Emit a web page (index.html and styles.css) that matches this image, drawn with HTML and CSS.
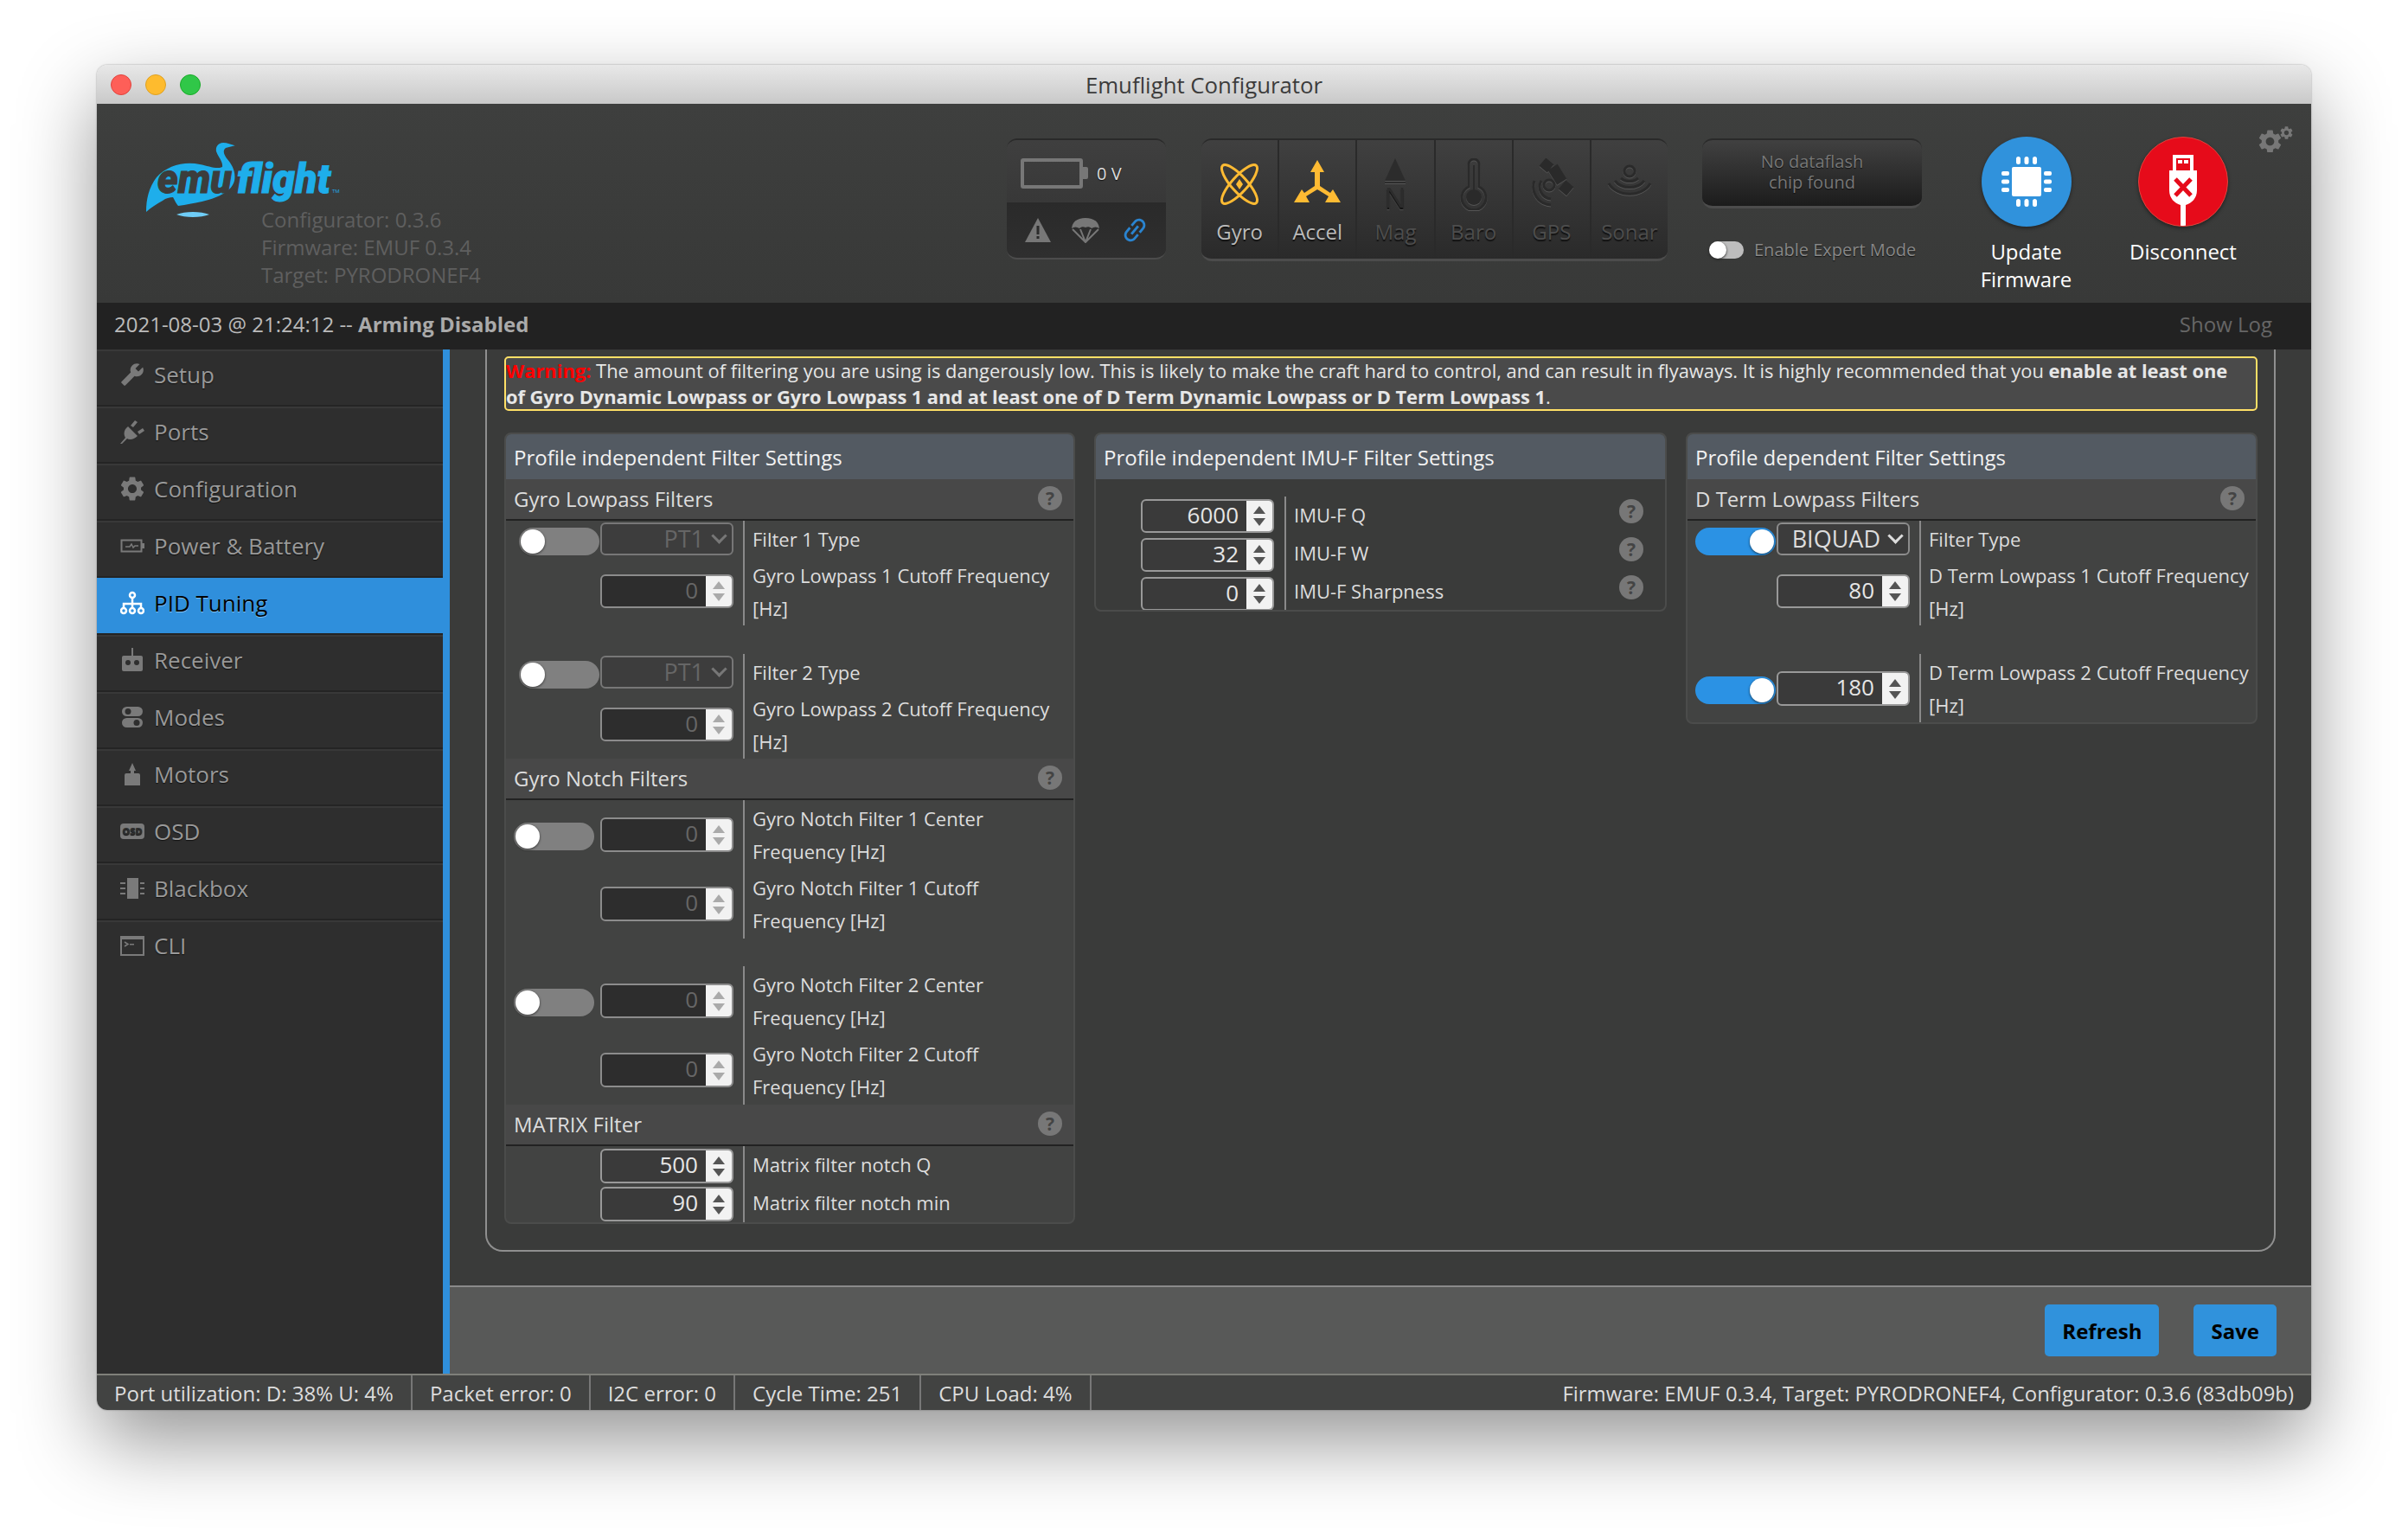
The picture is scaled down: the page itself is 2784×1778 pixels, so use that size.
FILE: index.html
```html
<!DOCTYPE html>
<html>
<head>
<meta charset="utf-8">
<title>Emuflight Configurator</title>
<link rel="stylesheet" href="styles.css">
</head>
<body>
<svg class="defs" width="0" height="0">
	<symbol id="gear" viewBox="2 2 20 20"><path d="M19.14 12.94c.04-.3.06-.61.06-.94 0-.32-.02-.64-.07-.94l2.03-1.58a.49.49 0 0 0 .12-.61l-1.92-3.32a.488.488 0 0 0-.59-.22l-2.39.96c-.5-.38-1.03-.7-1.62-.94l-.36-2.54a.484.484 0 0 0-.48-.41h-3.84c-.24 0-.43.17-.47.41l-.36 2.54c-.59.24-1.13.57-1.62.94l-2.39-.96c-.22-.08-.47 0-.59.22L2.74 8.87c-.12.21-.08.47.12.61l2.03 1.58c-.05.3-.09.63-.09.94s.02.64.07.94l-2.03 1.58a.49.49 0 0 0-.12.61l1.92 3.32c.12.22.37.29.59.22l2.39-.96c.5.38 1.03.7 1.62.94l.36 2.54c.05.24.24.41.48.41h3.84c.24 0 .44-.17.47-.41l.36-2.54c.59-.24 1.13-.56 1.62-.94l2.39.96c.22.08.47 0 .59-.22l1.92-3.32c.12-.22.07-.47-.12-.61l-2.01-1.58zM12 15.6c-1.98 0-3.6-1.62-3.6-3.6s1.62-3.6 3.6-3.6 3.6 1.62 3.6 3.6-1.62 3.6-3.6 3.6z"/></symbol>
</svg>

<div class="window">
	<div class="titlebar">
		<span class="light red"></span><span class="light yellow"></span><span class="light green"></span>
		<span class="title">Emuflight Configurator</span>
	</div>

	<div class="header">
		<div class="logo-block">
			<svg class="logo" width="225" height="90" viewBox="0 0 225 90">
				<path fill="#1eaeeb" d="M102.7 3.3 L92 6 C88 9 90 14 93 18 C99 25 104 33 102 44 C99 55 88 61 72 66 C62 69 52 70 44 72 L37 73 C34 70 33 66 31 63 C27 63 23 64 19 67 C12 71 5 75 0 80 C0 65 3 52 12 40 C24 26 45 21 62 25 C72 27 82 31 88 28 C89 22 83 16 81 10 C80 4 84 0 89 0 C94 0 98 2 102.7 3.3 Z"/>
				<path fill="#6fcdf7" d="M35 83 C45 79 63 79 73 83 C63 87 45 87 35 83 Z"/>
				<text class="logo-word" x="13" y="58" fill="#3c3d3c" stroke="#3c3d3c" textLength="86" lengthAdjust="spacingAndGlyphs">emu</text>
				<text class="logo-word" x="105" y="58" fill="#1eaeeb" stroke="#1eaeeb" textLength="108" lengthAdjust="spacingAndGlyphs">flight</text>
				<text class="logo-tm" x="215" y="58" fill="#1eaeeb">TM</text>
			</svg>
			<div class="versions">
				<div>Configurator: 0.3.6</div>
				<div>Firmware: EMUF 0.3.4</div>
				<div>Target: PYRODRONEF4</div>
			</div>
		</div>

		<div class="battery-box">
			<div class="battery-top">
				<span class="battery"></span><span class="battery-nub"></span>
				<span class="volts">0 V</span>
			</div>
			<div class="battery-bottom">
				<svg width="32" height="30" viewBox="0 0 32 30"><path fill="#777" d="M16 1 L31 29 H1 Z"/><rect x="14.5" y="10" width="3" height="10" fill="#2b2b2b"/><rect x="14.5" y="22" width="3" height="3" fill="#2b2b2b"/></svg>
				<svg width="34" height="30" viewBox="0 0 34 30"><path fill="#777" d="M1 13 C2 4 9 1 17 1 C25 1 32 4 33 13 C30 11 27 11 24 13 C22 11 19 11 17 12 C15 11 12 11 10 13 C7 11 4 11 1 13 Z"/><path fill="none" stroke="#777" stroke-width="2" d="M2 14 L17 29 L32 14 M11 14 L17 29 L23 14"/></svg>
				<svg class="link-icon" width="36" height="36" viewBox="0 0 24 24"><path fill="#2a84d0" d="M3.9 12c0-1.71 1.39-3.1 3.1-3.1h4V7H7c-2.76 0-5 2.24-5 5s2.24 5 5 5h4v-1.9H7c-1.71 0-3.1-1.39-3.1-3.1zM8 13h8v-2H8v2zm9-6h-4v1.9h4c1.71 0 3.1 1.39 3.1 3.1s-1.39 3.1-3.1 3.1h-4V17h4c2.76 0 5-2.24 5-5s-2.24-5-5-5z"/></svg>
			</div>
		</div>

		<div class="sensors">
			<div class="sensor on">
				<svg width="60" height="60" viewBox="0 0 60 60"><g fill="none" stroke="#ffbb33" stroke-width="3"><ellipse cx="30" cy="30" rx="9" ry="29" transform="rotate(42 30 30)"/><ellipse cx="30" cy="30" rx="9" ry="29" transform="rotate(-42 30 30)"/></g><path fill="#ffbb33" d="M30 24 L34 30 L30 36 L26 30 Z"/></svg>
				<span>Gyro</span>
			</div>
			<div class="sensor on">
				<svg width="60" height="60" viewBox="0 0 60 60"><g fill="#ffbb33"><path d="M30 2 L38 16 H33 V32 L45 40 L48 36 L57 51 H39 L43 44 L30 36 L17 44 L21 51 H3 L12 36 L15 40 L27 32 V16 H22 Z"/></g></svg>
				<span>Accel</span>
			</div>
			<div class="sensor">
				<svg class="emboss mag" width="60" height="66" viewBox="0 0 60 66"><path fill="#2c2c2c" d="M30 0 L42 26 H18 Z"/><rect x="18" y="27" width="24" height="2" fill="#2c2c2c"/><text class="mag-n" x="30" y="57" fill="#2c2c2c" text-anchor="middle">N</text></svg>
				<span>Mag</span>
			</div>
			<div class="sensor">
				<svg class="emboss" width="60" height="60" viewBox="0 0 60 60"><g fill="none" stroke="#2a2a2a" stroke-width="3"><path d="M24 33 V7 A6 6 0 0 1 36 7 V33 A14 14 0 1 1 24 33 Z"/></g><circle cx="30" cy="45" r="9" fill="#2a2a2a"/><rect x="29" y="8" width="2" height="30" fill="#2a2a2a"/></svg>
				<span>Baro</span>
			</div>
			<div class="sensor">
				<svg class="emboss" width="60" height="60" viewBox="0 0 60 60"><g fill="#2a2a2a"><rect x="18" y="2" width="12" height="12" transform="rotate(40 24 8)"/><rect x="30" y="9" width="13" height="20" transform="rotate(-32 36 19)"/><rect x="41" y="28" width="12" height="13" transform="rotate(40 47 34)"/></g><g fill="none" stroke="#2a2a2a" stroke-width="3"><circle cx="27" cy="31" r="6"/><path d="M18 26 A14 14 0 0 0 29 47 M10 26 A21 21 0 0 0 29 54"/></g></svg>
				<span>GPS</span>
			</div>
			<div class="sensor">
				<svg class="emboss" width="60" height="60" viewBox="0 0 60 60"><g fill="none" stroke="#2a2a2a" stroke-width="3"><circle cx="30" cy="15" r="6"/><path d="M20 23 A14 12 0 0 0 40 23 M13 26 A20 16 0 0 0 47 26 M6 29 A26 20 0 0 0 54 29"/></g></svg>
				<span>Sonar</span>
			</div>
		</div>

		<div class="flash-col">
			<div class="flash">No dataflash<br>chip found</div>
			<div class="expert">
				<span class="mini-toggle"><span class="mini-knob"></span></span>
				<span class="expert-label">Enable Expert Mode</span>
			</div>
		</div>

		<div class="round-col">
			<div class="round blue">
				<svg width="60" height="60" viewBox="0 0 60 60" fill="#fff"><rect x="13" y="13" width="34" height="34" rx="2"/><rect x="18" y="1" width="5" height="9" rx="2.5"/><rect x="27.500" y="1" width="5" height="9" rx="2.500"/><rect x="37" y="1" width="5" height="9" rx="2.500"/><rect x="18" y="50" width="5" height="9" rx="2.500"/><rect x="27.500" y="50" width="5" height="9" rx="2.500"/><rect x="37" y="50" width="5" height="9" rx="2.500"/><rect x="1" y="18" width="9" height="5" rx="2"/><rect x="1" y="27.500" width="9" height="5" rx="2"/><rect x="1" y="37" width="9" height="5" rx="2"/><rect x="50" y="18" width="9" height="5" rx="2"/><rect x="50" y="27.500" width="9" height="5" rx="2"/><rect x="50" y="37" width="9" height="5" rx="2"/></svg>
			</div>
			<div class="round-label">Update<br>Firmware</div>
		</div>
		<div class="round-col">
			<div class="round red">
				<svg width="40" height="104" viewBox="0 0 40 104"><path fill="#fff" d="M8 21 H32 V39 H36 V62 C36 71 30 77 23 79 V104 H17 V79 C10 77 4 71 4 62 V39 H8 Z"/><rect x="12" y="25" width="16" height="14" fill="#e60b1a"/><rect x="14" y="27" width="5" height="4" fill="#fff"/><rect x="21" y="27" width="5" height="4" fill="#fff"/><path stroke="#e60b1a" stroke-width="5" d="M11 49 L29 68 M29 49 L11 68"/></svg>
			</div>
			<div class="round-label">Disconnect</div>
		</div>

		<svg class="settings" width="40" height="30" viewBox="0 0 40 30" fill="#777">
			<use href="#gear" x="0" y="4" width="27" height="27"/>
			<use href="#gear" x="25" y="0" width="15" height="15"/>
		</svg>
	</div>

	<div class="logbar">
		<span>2021-08-03 @ 21:24:12 -- <b>Arming Disabled</b></span>
		<span class="show-log">Show Log</span>
	</div>

	<div class="middle">
		<ul class="menu">
			<li><svg width="28" height="28" viewBox="0 0 24 24"><path transform="translate(24 0) scale(-1 1)" d="M22.7 19l-9.1-9.1c.9-2.300.4-5-1.500-6.900-2-2-5-2.400-7.400-1.300L9 6 6 9 1.600 4.700C.4 7.100.9 10.100 2.900 12.100c1.900 1.900 4.600 2.400 6.900 1.500l9.100 9.100c.4.400 1 .4 1.400 0l2.300-2.300c.5-.4.5-1.100.1-1.400z"/></svg>Setup</li>
			<li><svg width="28" height="28" viewBox="0 0 28 28"><path d="M0 28 L6 21 C3 16 5 11 9 8 L20 19 C16 23 11 24 8 22 L2 28 Z"/><path d="M12 7 L17 1 L20 3 L15 9 Z M20 14 L26 10 L28 13 L22 17 Z"/></svg>Ports</li>
			<li><svg width="28" height="28" viewBox="0 0 28 28"><use href="#gear" width="28" height="28"/></svg>Configuration</li>
			<li><svg width="28" height="28" viewBox="0 0 28 28"><rect x="1.500" y="7.500" width="23" height="13" fill="none" stroke="#7a7a7a" stroke-width="2"/><rect x="25" y="11" width="3" height="6"/><path d="M6 15 H11 L13 12 L15 16 L17 14 H21" fill="none" stroke="#7a7a7a" stroke-width="1.500"/></svg>Power &amp; Battery</li>
			<li class="active"><svg width="28" height="28" viewBox="0 0 28 28"><g fill="none" stroke="#fff" stroke-width="2.500"><circle cx="14" cy="5" r="3"/><circle cx="4" cy="23" r="3"/><circle cx="14" cy="23" r="3"/><circle cx="24" cy="23" r="3"/><path d="M14 8 V20 M4 20 V15 H24 V20"/></g></svg><span>PID Tuning</span></li>
			<li><svg width="28" height="28" viewBox="0 0 28 28"><rect x="13" y="0" width="2" height="10"/><path d="M4 9 H24 Q26 9 26 11 V25 Q26 27 24 27 H4 Q2 27 2 25 V11 Q2 9 4 9 Z"/><circle cx="9" cy="17" r="3" fill="#2e2e2e"/><circle cx="19" cy="17" r="3" fill="#2e2e2e"/></svg>Receiver</li>
			<li><svg width="28" height="28" viewBox="0 0 28 28"><rect x="2" y="2" width="24" height="11" rx="5.500"/><rect x="2" y="15" width="24" height="11" rx="5.500"/><circle cx="9" cy="7.500" r="3.500" fill="#2e2e2e"/><circle cx="19" cy="20.500" r="3.500" fill="#2e2e2e"/></svg>Modes</li>
			<li><svg width="28" height="28" viewBox="0 0 28 28"><path d="M14 1 L18 10 H16 V13 H21 Q23 13 23 15 V27 H5 V15 Q5 13 7 13 H12 V10 H10 Z"/></svg>Motors</li>
			<li><svg width="28" height="28" viewBox="0 0 28 28"><rect x="0" y="5" width="28" height="18" rx="4"/><text class="osd-mark" x="14" y="18" text-anchor="middle" fill="#2e2e2e">OSD</text></svg>OSD</li>
			<li><svg width="28" height="28" viewBox="0 0 28 28"><rect x="8" y="2" width="13" height="24"/><path d="M0 7 H6 V9 H0 Z M0 13 H6 V15 H0 Z M0 19 H6 V21 H0 Z M23 7 H28 V9 H23 Z M23 13 H28 V15 H23 Z M23 19 H28 V21 H23 Z"/></svg>Blackbox</li>
			<li class="last"><svg width="28" height="28" viewBox="0 0 28 28"><rect x="1" y="4" width="26" height="21" fill="none" stroke="#7a7a7a" stroke-width="2"/><rect x="1" y="4" width="26" height="3"/><path d="M5 10 L9 12.500 L5 15" fill="none" stroke="#7a7a7a" stroke-width="1.500"/><rect x="11" y="12" width="5" height="1.500"/></svg>CLI</li>
		</ul>

		<div class="content">
			<div class="main">
				<div class="tab-box">
					<div class="warning"><span class="warn-word">Warning:</span> The amount of filtering you are using is dangerously low. This is likely to make the craft hard to control, and can result in flyaways. It is highly recommended that you <b>enable at least one<br>of Gyro Dynamic Lowpass or Gyro Lowpass 1 and at least one of D Term Dynamic Lowpass or D Term Lowpass 1</b>.</div>

					<div class="panels">
						<div class="panel p1">
							<div class="panel-head">Profile independent Filter Settings</div>
							<div class="sub-head">Gyro Lowpass Filters<span class="help">?</span></div>

							<div class="row">
								<div class="ctl">
									<div class="line ends">
										<span class="toggle"><span class="knob"></span></span>
										<span class="select off">PT1<i class="chev"></i></span>
									</div>
									<div class="line gap22">
										<span class="spin off"><span class="val">0</span><span class="arrows"><i class="up"></i><i class="down"></i></span></span>
									</div>
								</div>
								<div class="lbl"><p>Filter 1 Type</p><p>Gyro Lowpass 1 Cutoff Frequency<br>[Hz]</p></div>
							</div>
							<div class="row next">
								<div class="ctl">
									<div class="line ends">
										<span class="toggle"><span class="knob"></span></span>
										<span class="select off">PT1<i class="chev"></i></span>
									</div>
									<div class="line gap22">
										<span class="spin off"><span class="val">0</span><span class="arrows"><i class="up"></i><i class="down"></i></span></span>
									</div>
								</div>
								<div class="lbl"><p>Filter 2 Type</p><p>Gyro Lowpass 2 Cutoff Frequency<br>[Hz]</p></div>
							</div>

							<div class="sub-head">Gyro Notch Filters<span class="help">?</span></div>
							<div class="row notch">
								<div class="ctl">
									<div class="line top20 shifted">
										<span class="toggle"><span class="knob"></span></span>
										<span class="spin tall off"><span class="val">0</span><span class="arrows"><i class="up"></i><i class="down"></i></span></span>
									</div>
									<div class="line top40">
										<span class="spin tall off"><span class="val">0</span><span class="arrows"><i class="up"></i><i class="down"></i></span></span>
									</div>
								</div>
								<div class="lbl"><p>Gyro Notch Filter 1 Center<br>Frequency [Hz]</p><p>Gyro Notch Filter 1 Cutoff<br>Frequency [Hz]</p></div>
							</div>
							<div class="row notch next-small">
								<div class="ctl">
									<div class="line top20 shifted">
										<span class="toggle"><span class="knob"></span></span>
										<span class="spin tall off"><span class="val">0</span><span class="arrows"><i class="up"></i><i class="down"></i></span></span>
									</div>
									<div class="line top40">
										<span class="spin tall off"><span class="val">0</span><span class="arrows"><i class="up"></i><i class="down"></i></span></span>
									</div>
								</div>
								<div class="lbl"><p>Gyro Notch Filter 2 Center<br>Frequency [Hz]</p><p>Gyro Notch Filter 2 Cutoff<br>Frequency [Hz]</p></div>
							</div>

							<div class="sub-head">MATRIX Filter<span class="help">?</span></div>
							<div class="row matrix">
								<div class="ctl">
									<div class="line top3">
										<span class="spin tall"><span class="val">500</span><span class="arrows"><i class="up"></i><i class="down"></i></span></span>
									</div>
									<div class="line top4">
										<span class="spin tall"><span class="val">90</span><span class="arrows"><i class="up"></i><i class="down"></i></span></span>
									</div>
								</div>
								<div class="lbl single"><p>Matrix filter notch Q</p><p>Matrix filter notch min</p></div>
							</div>
						</div>

						<div class="panel p2">
							<div class="panel-head">Profile independent IMU-F Filter Settings</div>
							<div class="row imu">
								<div class="ctl">
									<div class="line top3"><span class="spin"><span class="val">6000</span><span class="arrows"><i class="up"></i><i class="down"></i></span></span></div>
									<div class="line top6"><span class="spin"><span class="val">32</span><span class="arrows"><i class="up"></i><i class="down"></i></span></span></div>
									<div class="line top6"><span class="spin"><span class="val">0</span><span class="arrows"><i class="up"></i><i class="down"></i></span></span></div>
								</div>
								<div class="lbl single">
									<p>IMU-F Q<span class="help">?</span></p>
									<p>IMU-F W<span class="help">?</span></p>
									<p>IMU-F Sharpness<span class="help">?</span></p>
								</div>
							</div>
						</div>

						<div class="panel p3">
							<div class="panel-head">Profile dependent Filter Settings</div>
							<div class="sub-head">D Term Lowpass Filters<span class="help">?</span></div>
							<div class="row">
								<div class="ctl">
									<div class="line ends">
										<span class="toggle on"><span class="knob"></span></span>
										<span class="select">BIQUAD<i class="chev"></i></span>
									</div>
									<div class="line gap22">
										<span class="spin"><span class="val">80</span><span class="arrows"><i class="up"></i><i class="down"></i></span></span>
									</div>
								</div>
								<div class="lbl"><p>Filter Type</p><p>D Term Lowpass 1 Cutoff Frequency<br>[Hz]</p></div>
							</div>
							<div class="row next">
								<div class="ctl">
									<div class="line top20 shifted">
										<span class="toggle on"><span class="knob"></span></span>
										<span class="spin tall"><span class="val">180</span><span class="arrows"><i class="up"></i><i class="down"></i></span></span>
									</div>
								</div>
								<div class="lbl"><p>D Term Lowpass 2 Cutoff Frequency<br>[Hz]</p></div>
							</div>
						</div>
					</div>
				</div>
			</div>
			<div class="toolbar">
				<a class="btn">Refresh</a>
				<a class="btn">Save</a>
			</div>
		</div>
	</div>

	<div class="statusbar">
		<span class="stat">Port utilization: D: 38% U: 4%</span>
		<span class="stat">Packet error: 0</span>
		<span class="stat">I2C error: 0</span>
		<span class="stat">Cycle Time: 251</span>
		<span class="stat">CPU Load: 4%</span>
		<span class="fw">Firmware: EMUF 0.3.4, Target: PYRODRONEF4, Configurator: 0.3.6 (83db09b)</span>
	</div>
</div>
</body>
</html>
```

FILE: styles.css
```css
* { box-sizing: border-box; }
html, body { margin: 0; height: 100%; }
body {
	background: #fff;
	font-family: "Open Sans", sans-serif;
	font-size: 22px;
	color: #ddd;
	overflow: hidden;
}
.defs { display: block; height: 0; }
p { margin: 0; }
b { font-weight: 700; }

.window {
	width: 2560px;
	height: 1555px;
	margin: 75px 0 0 112px;
	display: flex;
	flex-direction: column;
	border-radius: 12px;
	overflow: hidden;
	box-shadow: 0 36px 90px rgba(0,0,0,.42), 0 0 2px rgba(0,0,0,.4);
}

/* title bar */
.titlebar {
	height: 45px;
	flex: none;
	display: flex;
	align-items: center;
	padding-left: 16px;
	gap: 16px;
	background: linear-gradient(#e8e8e8, #c9c9c9);
	position: relative;
}
.light { width: 24px; height: 24px; border-radius: 50%; }
.red { background: #fe5f58; border: 1px solid #e0443e; }
.yellow { background: #febb2e; border: 1px solid #dea123; }
.green { background: #30c748; border: 1px solid #1aab29; }
.title {
	position: absolute;
	left: 0;
	right: 0;
	text-align: center;
	font-size: 25.800px;
	color: #3c3c3c;
}

/* header */
.header {
	height: 230px;
	flex: none;
	display: flex;
	align-items: flex-start;
	padding-top: 40px;
	background: linear-gradient(#3e3f3e, #383938);
	position: relative;
}
.logo-block { flex: 0 0 1052px; padding: 5px 0 0 57px; }
.logo { display: block; overflow: visible; }
.logo-word { font-family: Roboto, sans-serif; font-weight: 900; font-style: italic; font-size: 48px; stroke-width: 1; }
.logo-tm { font-size: 6px; font-family: "Open Sans", sans-serif; }
.versions {
	margin: -17px 0 0 133px;
	font-size: 24px;
	line-height: 32px;
	color: #5f5f5f;
}

.battery-box {
	width: 184px;
	height: 140px;
	border-radius: 12px;
	border-top: 2px solid #2a2a2a;
	border-bottom: 2px solid #4c4c4c;
	overflow: hidden;
}
.battery-top {
	height: 72px;
	display: flex;
	align-items: center;
	padding: 4px 0 0 16px;
	background: linear-gradient(#3f3f3f, #383838);
}
.battery { width: 72px; height: 35px; border: 4px solid #777; border-radius: 3px; }
.battery-nub { width: 6px; height: 14px; background: #777; border-radius: 0 2px 2px 0; }
.volts { margin-left: 10px; font-size: 20px; color: #ddd; text-shadow: 0 1px 1px #111; }
.battery-bottom {
	height: 64px;
	display: flex;
	align-items: center;
	padding-left: 20px;
	gap: 22px;
	background: linear-gradient(#2a2a2a, #2f2f2f);
}
.link-icon { transform: rotate(-50deg); }

.sensors {
	margin-left: 41px;
	width: 539px;
	height: 142px;
	display: flex;
	border-radius: 12px;
	border-top: 2px solid #2a2a2a;
	border-bottom: 3px solid #4c4c4c;
	overflow: hidden;
}
.sensor {
	flex: 1;
	display: flex;
	flex-direction: column;
	align-items: center;
	padding-top: 21px;
	background: linear-gradient(#404040, #2a2a2a);
	border-left: 2px solid #2a2a2a;
	font-size: 24px;
	color: #4d4d4d;
	text-shadow: 0 2px 1px #111;
}
.sensor:first-child { border-left: 0; }
.sensor svg { display: block; }
.sensor svg.mag { margin-bottom: -6px; }
.sensor span { margin-top: 9px; line-height: 32px; }
.sensor.on { color: #bbb; }
.emboss { filter: drop-shadow(0 1px 0 #555); }
.mag-n { font-family: "Liberation Sans", sans-serif; font-size: 34px; }

.flash-col { margin-left: 40px; width: 254px; }
.flash {
	height: 81px;
	border-radius: 12px;
	border-top: 2px solid #2a2a2a;
	border-bottom: 3px solid #4c4c4c;
	background: linear-gradient(#414141, #1c1c1c);
	text-align: center;
	font-size: 20px;
	line-height: 24px;
	padding-top: 13px;
	color: #777;
	text-shadow: 0 1px 1px #111;
}
.expert { display: flex; align-items: center; margin: 34px 0 0 8px; }
.mini-toggle {
	width: 40px;
	height: 20px;
	border-radius: 10px;
	background: #bdbdbd;
	display: flex;
}
.mini-knob { width: 20px; height: 20px; border-radius: 50%; background: #fff; box-shadow: 0 1px 3px #222; }
.expert-label { margin-left: 12px; font-size: 20px; color: #888; text-shadow: 0 1px 1px #111; }

.round-col {
	width: 182px;
	margin-top: -2px;
	display: flex;
	flex-direction: column;
	align-items: center;
}
.flash-col + .round-col { margin-left: 30px; width: 181px; }
.round {
	width: 104px;
	height: 104px;
	border-radius: 50%;
	display: flex;
	align-items: center;
	justify-content: center;
	overflow: hidden;
	box-shadow: 0 2px 4px rgba(0,0,0,.4);
}
.round.blue { background: #3092dc; }
.round.red { background: #e60b1a; }
.round-label {
	margin-top: 13px;
	text-align: center;
	font-size: 24px;
	line-height: 32px;
	color: #fff;
}
.settings { position: absolute; right: 21px; top: 26px; }

/* log line */
.logbar {
	height: 54px;
	flex: none;
	display: flex;
	align-items: center;
	justify-content: space-between;
	padding: 0 45px 6px 20px;
	background: #222;
	font-size: 24px;
	color: #bbb;
}
.logbar b { color: #aaa; }
.show-log { color: #666; }

/* menu */
.middle { flex: 1; display: flex; min-height: 0; }
.menu {
	width: 408px;
	flex: none;
	margin: 0;
	padding: 0;
	list-style: none;
	background: #2e2e2e;
	border-right: 8px solid #2f8fdc;
}
.menu li {
	height: 66px;
	display: flex;
	align-items: center;
	padding: 0 0 6px 27px;
	font-size: 26px;
	color: #999;
	border-bottom: 2px solid #242424;
	box-shadow: inset 0 2px 0 #383838;
	text-shadow: 0 1px 1px #111;
}
.menu li svg { width: 28px; margin-right: 11px; fill: #7a7a7a; flex: none; }
.menu li.active {
	background: #2f8fdc;
	box-shadow: none;
	color: #000;
	text-shadow: 0 1px 0 #7fc0f0;
}
.menu li.last { height: 64px; padding-bottom: 7px; border-bottom: 0; }

/* content */
.content { flex: 1; display: flex; flex-direction: column; min-width: 0; }
.main {
	flex: 1;
	background: #3a3b3a;
	padding: 0 41px;
	min-height: 0;
}
.tab-box {
	height: 1043px;
	border: 2px solid #8f8f8f;
	border-top: 0;
	border-radius: 0 0 20px 20px;
	padding: 8px 19px 0 20px;
}
.warning {
	height: 63px;
	border: 2px solid #ffe066;
	border-radius: 5px;
	background: #4a4a4a;
	font-size: 21.900px;
	line-height: 30px;
	color: #e6e6e6;
	white-space: nowrap;
	overflow: hidden;
}
.warning b { letter-spacing: -0.07px; }
.warn-word { color: #ff0000; font-weight: 700; }

.panels { display: flex; align-items: flex-start; margin-top: 25px; }
.panel {
	border: 2px solid #4b4c4b;
	border-radius: 8px;
	overflow: hidden;
}
.p1 { width: 660px; background: #424342; }
.p2 { width: 662px; margin-left: 22px; height: 207px; }
.p3 { width: 661px; margin-left: 22px; background: #424342; }
.panel-head {
	height: 52px;
	background: #535a62;
	color: #f2f2f2;
	font-size: 24px;
	line-height: 54px;
	padding-left: 9px;
}
.sub-head {
	height: 48px;
	display: flex;
	align-items: center;
	justify-content: space-between;
	padding: 0 13px 2px 9px;
	background: #484848;
	border-bottom: 2px solid #222;
	font-size: 24px;
	color: #ddd;
}
.help {
	width: 28px;
	height: 28px;
	border-radius: 50%;
	background: #777;
	color: #444;
	font-size: 21px;
	font-weight: 700;
	line-height: 28px;
	text-align: center;
	flex: none;
}

/* filter rows */
.row { display: flex; }
.row.next { margin-top: 33px; }
.row.next-small { margin-top: 32px; }
.row.notch { height: 160px; }
.row.matrix { height: 88px; }
.ctl { width: 274px; flex: none; padding-right: 11px; }
.p2 .ctl { width: 218px; padding-right: 12px; }
.p3 .ctl { width: 268px; }
.line { display: flex; justify-content: flex-end; }
.line.ends { align-items: flex-end; margin-top: 2px; }
.line.gap22 { margin-top: 22px; }
.line.top3 { margin-top: 3px; }
.line.top4 { margin-top: 4px; }
.line.top6 { margin-top: 6px; }
.line.top20 { margin-top: 20px; }
.line.top40 { margin-top: 40px; }
.line.shifted { align-items: center; }
.line.shifted .toggle { margin: 4px 7px 0 0; }
.p3 .line.shifted .toggle { margin-right: 1px; }
.lbl {
	flex: 1;
	border-left: 2px solid #8a8a8a;
	padding: 2px 0 1px 9px;
	font-size: 22px;
	line-height: 38px;
	color: #ddd;
	white-space: nowrap;
}
.lbl p + p { margin-top: 4px; }
.lbl.single p + p { margin-top: 6px; }
.row.imu { margin-top: 20px; height: 132px; }
.imu .lbl p { display: flex; justify-content: space-between; align-items: flex-start; padding-right: 25px; }
.imu .help { margin-top: 1px; }

.toggle {
	width: 93px;
	height: 32px;
	border-radius: 16px;
	background: #808080;
	display: flex;
	align-items: center;
	padding: 0 2px;
	margin-right: 1px;
	flex: none;
}
.toggle.on { background: #2b92e4; justify-content: flex-end; }
.knob {
	width: 28px;
	height: 28px;
	border-radius: 50%;
	background: #fff;
	box-shadow: 0 1px 3px rgba(0,0,0,.6);
}

.select {
	width: 154px;
	height: 38px;
	border: 2px solid #8c8c8c;
	border-radius: 6px;
	display: flex;
	align-items: center;
	justify-content: flex-end;
	padding: 0 5px 2px 0;
	font-size: 27px;
	color: #ddd;
	background: #3c3c3c;
}
.select.off { color: #666; border-color: #777; background: #3d3d3d; }
.chev {
	width: 13px;
	height: 13px;
	margin: -6px 3px 0 11px;
	border-right: 3px solid #ddd;
	border-bottom: 3px solid #ddd;
	transform: rotate(45deg);
}
.select.off .chev { border-color: #777; }

.spin {
	width: 154px;
	height: 39px;
	border: 2px solid #999;
	border-radius: 6px;
	display: flex;
	overflow: hidden;
	background: #3a3a3a;
	font-size: 26px;
	color: #e6e6e6;
}
.spin.tall { height: 40px; }
.spin.off { background: #2d2d2d; color: #666; border-color: #8c8c8c; }
.val { flex: 1; text-align: right; padding-right: 9px; line-height: 33px; }
.arrows {
	width: 30px;
	background: #f2f2f2;
	display: flex;
	flex-direction: column;
	align-items: center;
	justify-content: center;
	gap: 5px;
}
.up { border: 7px solid transparent; border-top: 0; border-bottom: 9px solid #555; }
.down { border: 7px solid transparent; border-bottom: 0; border-top: 9px solid #555; }
.off .up { border-bottom-color: #aaa; }
.off .down { border-top-color: #aaa; }

/* bottom */
.toolbar {
	height: 102px;
	flex: none;
	display: flex;
	justify-content: flex-end;
	align-items: center;
	gap: 40px;
	padding: 0 40px 0 0;
	background: #585958;
	border-top: 2px solid #8a8a8a;
}
.btn {
	height: 60px;
	padding: 0 20px;
	display: flex;
	align-items: center;
	background: #3092dc;
	border-radius: 5px;
	font-size: 24px;
	font-weight: 700;
	color: #000;
}
.statusbar {
	height: 42px;
	flex: none;
	display: flex;
	align-items: center;
	background: #424342;
	border-top: 2px solid #7f807a;
	font-size: 24px;
	color: #ddd;
}
.stat {
	height: 100%;
	display: flex;
	align-items: center;
	padding: 0 20px;
	border-right: 2px solid #777;
	white-space: nowrap;
}
.fw { margin-left: auto; padding-right: 20px; font-size: 23.900px; white-space: nowrap; }
.osd-mark { font-size: 11px; font-weight: 800; font-family: "Open Sans", sans-serif; }
```
